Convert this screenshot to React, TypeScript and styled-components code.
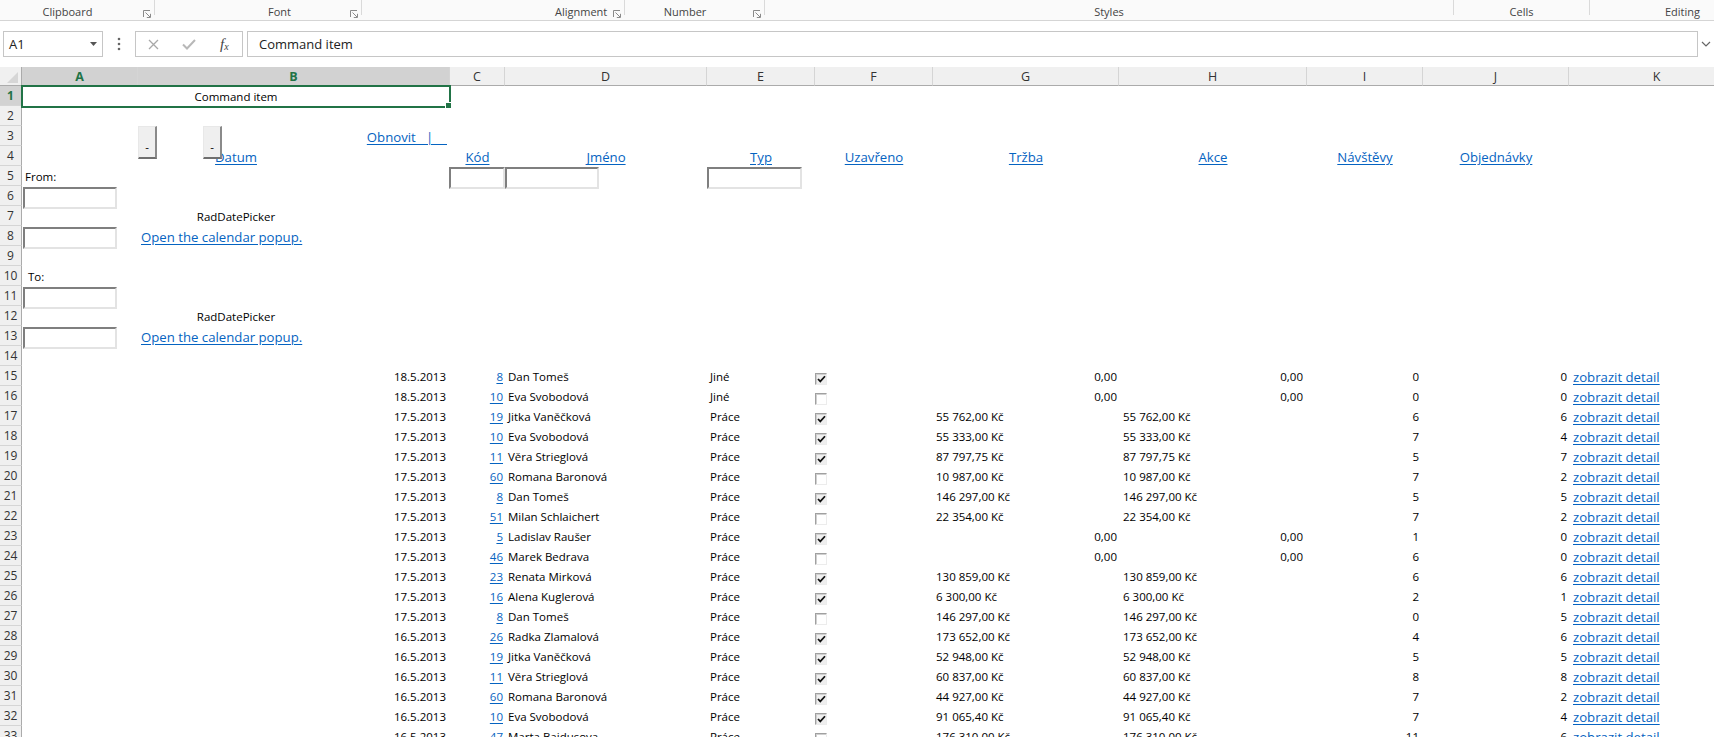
import React from 'react'
import styled, { createGlobalStyle, css } from 'styled-components'

const COLS = [22, 116, 312, 55, 202, 108, 118, 186, 188, 116, 146, 176]
const LETTERS = ['A', 'B', 'C', 'D', 'E', 'F', 'G', 'H', 'I', 'J', 'K']
const ROWS = 33
const LINK = '#0563c1'
const GREEN = '#217346'

// indent: captions that sit off-centre in the ref start at a fixed offset
const GROUPS: { name: string; w: number; launcher: boolean; indent?: number }[] = [
  { name: 'Clipboard', w: 155, launcher: true },
  { name: 'Font', w: 207, launcher: true, indent: 113 },
  { name: 'Alignment', w: 263, launcher: true, indent: 193 },
  { name: 'Number', w: 140, launcher: true },
  { name: 'Styles', w: 689, launcher: false },
  { name: 'Cells', w: 136, launcher: false },
  { name: 'Editing', w: 186, launcher: false }
]

type Rec = {
  d: string
  code: number
  name: string
  type: string
  done: boolean
  sales: string
  action: string
  visits: number
  orders: number
}

const DATA: Rec[] = [
  { d: '18.5.2013', code: 8, name: 'Dan Tomeš', type: 'Jiné', done: true, sales: '0,00', action: '0,00', visits: 0, orders: 0 },
  { d: '18.5.2013', code: 10, name: 'Eva Svobodová', type: 'Jiné', done: false, sales: '0,00', action: '0,00', visits: 0, orders: 0 },
  { d: '17.5.2013', code: 19, name: 'Jitka Vaněčková', type: 'Práce', done: true, sales: '55 762,00 Kč', action: '55 762,00 Kč', visits: 6, orders: 6 },
  { d: '17.5.2013', code: 10, name: 'Eva Svobodová', type: 'Práce', done: true, sales: '55 333,00 Kč', action: '55 333,00 Kč', visits: 7, orders: 4 },
  { d: '17.5.2013', code: 11, name: 'Věra Strieglová', type: 'Práce', done: true, sales: '87 797,75 Kč', action: '87 797,75 Kč', visits: 5, orders: 7 },
  { d: '17.5.2013', code: 60, name: 'Romana Baronová', type: 'Práce', done: false, sales: '10 987,00 Kč', action: '10 987,00 Kč', visits: 7, orders: 2 },
  { d: '17.5.2013', code: 8, name: 'Dan Tomeš', type: 'Práce', done: true, sales: '146 297,00 Kč', action: '146 297,00 Kč', visits: 5, orders: 5 },
  { d: '17.5.2013', code: 51, name: 'Milan Schlaichert', type: 'Práce', done: false, sales: '22 354,00 Kč', action: '22 354,00 Kč', visits: 7, orders: 2 },
  { d: '17.5.2013', code: 5, name: 'Ladislav Raušer', type: 'Práce', done: true, sales: '0,00', action: '0,00', visits: 1, orders: 0 },
  { d: '17.5.2013', code: 46, name: 'Marek Bedrava', type: 'Práce', done: false, sales: '0,00', action: '0,00', visits: 6, orders: 0 },
  { d: '17.5.2013', code: 23, name: 'Renata Mirková', type: 'Práce', done: true, sales: '130 859,00 Kč', action: '130 859,00 Kč', visits: 6, orders: 6 },
  { d: '17.5.2013', code: 16, name: 'Alena Kuglerová', type: 'Práce', done: true, sales: '6 300,00 Kč', action: '6 300,00 Kč', visits: 2, orders: 1 },
  { d: '17.5.2013', code: 8, name: 'Dan Tomeš', type: 'Práce', done: false, sales: '146 297,00 Kč', action: '146 297,00 Kč', visits: 0, orders: 5 },
  { d: '16.5.2013', code: 26, name: 'Radka Zlamalová', type: 'Práce', done: true, sales: '173 652,00 Kč', action: '173 652,00 Kč', visits: 4, orders: 6 },
  { d: '16.5.2013', code: 19, name: 'Jitka Vaněčková', type: 'Práce', done: true, sales: '52 948,00 Kč', action: '52 948,00 Kč', visits: 5, orders: 5 },
  { d: '16.5.2013', code: 11, name: 'Věra Strieglová', type: 'Práce', done: true, sales: '60 837,00 Kč', action: '60 837,00 Kč', visits: 8, orders: 8 },
  { d: '16.5.2013', code: 60, name: 'Romana Baronová', type: 'Práce', done: true, sales: '44 927,00 Kč', action: '44 927,00 Kč', visits: 7, orders: 2 },
  { d: '16.5.2013', code: 10, name: 'Eva Svobodová', type: 'Práce', done: true, sales: '91 065,40 Kč', action: '91 065,40 Kč', visits: 7, orders: 4 },
  { d: '16.5.2013', code: 47, name: 'Marta Bajdusova', type: 'Práce', done: false, sales: '176 310,00 Kč', action: '176 310,00 Kč', visits: 11, orders: 6 }
]

const HEADERS = [
  { c: 2, label: 'Kód' },
  { c: 3, label: 'Jméno' },
  { c: 4, label: 'Typ' },
  { c: 5, label: 'Uzavřeno' },
  { c: 6, label: 'Tržba' },
  { c: 7, label: 'Akce' },
  { c: 8, label: 'Návštěvy' },
  { c: 9, label: 'Objednávky' }
]

const GlobalStyle = createGlobalStyle`
  html, body {
    margin: 0;
    padding: 0;
    background: #fff;
    overflow: hidden;
  }
  body {
    width: 1714px;
    height: 737px;
    font-family: 'Open Sans', 'Noto Sans', sans-serif;
    color: #000;
  }
`

/* ribbon group captions */
const Ribbon = styled.div`
  display: flex;
  height: 20px;
  border-bottom: 1px solid #d5d5d5;
  background: #fafafa;
  overflow: hidden;
`

const Group = styled.div<{ $w: number }>`
  display: flex;
  flex: 0 0 ${({ $w }) => $w}px;
  min-width: 0;
  height: 20px;
`

const GroupLabel = styled.div<{ $indent?: number }>`
  flex: 1 1 0;
  min-width: 0;
  text-align: ${({ $indent }) => ($indent == null ? 'center' : 'left')};
  font-size: 11px;
  line-height: 17px;
  padding: 3px 0 0 ${({ $indent }) => $indent ?? 0}px;
  color: #444;
  white-space: nowrap;
`

const Launcher = styled.span`
  flex: 0 0 19px;
  box-sizing: border-box;
  padding: 10px 0 0 8px;
  display: flex;
  align-items: flex-start;
`

const GroupSep = styled.span`
  flex: 0 0 1px;
  height: 15px;
  background: #dadada;
`

/* formula bar */
const FormulaArea = styled.div`
  display: flex;
  align-items: flex-start;
  height: 46px;
  box-sizing: border-box;
  padding: 10px 0 0 3px;
  background: #fff;
`

const boxFrame = css`
  box-sizing: border-box;
  height: 26px;
  border: 1px solid #c6c6c6;
  background: #fff;
`

const NameBox = styled.div`
  ${boxFrame};
  width: 100px;
  display: flex;
  align-items: center;
  justify-content: space-between;
  padding: 0 5px;
  font-size: 13px;
  color: #222;
`

const Dots = styled.div`
  width: 32px;
  height: 26px;
  display: flex;
  align-items: center;
  justify-content: center;
`

const FxBox = styled.div`
  ${boxFrame};
  width: 108px;
  display: grid;
  grid-template-columns: repeat(3, 1fr);
  align-items: center;
  justify-items: center;
`

const Fx = styled.span`
  font-family: 'Liberation Serif', 'DejaVu Serif', serif;
  font-style: italic;
  font-size: 15px;
  color: #444;
  line-height: 1;

  sub {
    font-size: 10px;
    vertical-align: -1px;
  }
`

const FormulaInput = styled.div`
  ${boxFrame};
  flex: 1;
  margin-left: 4px;
  padding-left: 11px;
  font-size: 13px;
  line-height: 24px;
  color: #222;
`

const Expand = styled.div`
  width: 16px;
  height: 26px;
  display: flex;
  align-items: center;
  justify-content: center;
`

/* sheet grid */
const Sheet = styled.div`
  display: grid;
  grid-template-columns: ${COLS.map(w => `${w}px`).join(' ')};
  grid-template-rows: 19px repeat(${ROWS}, 20px);
  font-size: 11.5px;
  line-height: 20px;
  color: #000;
`

const Corner = styled.div`
  grid-column: 1;
  grid-row: 1;
  box-sizing: border-box;
  background: #f0f0f0;
  border-right: 1px solid #ababab;
  border-bottom: 1px solid #ababab;
`

const ColHead = styled.div<{ $sel?: boolean }>`
  grid-row: 1;
  box-sizing: border-box;
  border-bottom: 1px solid #ababab;
  border-right: 1px solid #d5d5d5;
  background: ${({ $sel }) => ($sel ? '#d2d2d2' : '#f0f0f0')};
  color: ${({ $sel }) => ($sel ? GREEN : '#333')};
  font-weight: ${({ $sel }) => ($sel ? 700 : 400)};
  font-size: 12.5px;
  line-height: 19px;
  text-align: center;
`

const RowHead = styled.div<{ $row: number; $sel?: boolean }>`
  grid-column: 1;
  grid-row: ${({ $row }) => $row + 1};
  box-sizing: border-box;
  border-right: 1px solid #ababab;
  border-bottom: 1px solid #d5d5d5;
  background: ${({ $sel }) => ($sel ? '#d2d2d2' : '#f0f0f0')};
  color: ${({ $sel }) => ($sel ? GREEN : '#333')};
  font-weight: ${({ $sel }) => ($sel ? 700 : 400)};
  font-size: 12px;
  line-height: 20px;
  text-align: center;
`

type Place = { $c: number; $r: number; $span?: number }
type Align = { $align?: 'start' | 'end' | 'center'; $pl?: number; $pr?: number }

const place = css<Place>`
  grid-column: ${({ $c }) => $c + 2} / span ${({ $span }) => $span ?? 1};
  grid-row: ${({ $r }) => $r + 1};
`

const aligned = css<Place & Align>`
  ${place};
  justify-self: ${({ $align }) => $align ?? 'start'};
  padding: 1px ${({ $pr }) => $pr ?? 0}px 0 ${({ $pl }) => $pl ?? 0}px;
  white-space: nowrap;
`

const CellText = styled.div<Place & Align>`
  ${aligned};
`

const CellLink = styled.a<Place & Align & { $big?: boolean }>`
  ${aligned};
  color: ${LINK};
  font-size: ${({ $big }) => ($big ? 13.2 : 11.5)}px;
  text-decoration: underline;
  text-underline-offset: 2px;
  cursor: pointer;
`

const Selection = styled.div`
  grid-column: 2 / span 2;
  grid-row: 2;
  margin: -1px -1px -2px -1px;
  border: 2px solid ${GREEN};
  position: relative;
  z-index: 2;
  display: flex;
  align-items: center;
  justify-content: center;
  line-height: 18px;
`

const FillHandle = styled.span`
  position: absolute;
  right: -3px;
  bottom: -3px;
  width: 5px;
  height: 5px;
  background: ${GREEN};
  border: 1px solid #fff;
`

const ButtonPair = styled.div<Place>`
  ${place};
  display: flex;
  gap: 46px;
  align-self: start;
  position: relative;
  z-index: 1;
`

const PushButton = styled.button`
  width: 19px;
  height: 33px;
  padding: 0 0 3px;
  box-sizing: border-box;
  background: #efefef;
  border-style: solid;
  border-width: 1px 2px 2px 1px;
  border-color: #e8e8e8 #8a8a8a #6f6f6f #e8e8e8;
  display: flex;
  align-items: flex-end;
  justify-content: center;
  font-family: 'Open Sans', sans-serif;
  font-size: 11.5px;
  line-height: 14px;
  color: #000;
`

const InputBox = styled.div<Place & { $w: number; $ml?: number }>`
  ${place};
  justify-self: start;
  align-self: start;
  width: ${({ $w }) => $w}px;
  height: 22px;
  margin: 1px 0 0 ${({ $ml }) => $ml ?? 0}px;
  box-sizing: border-box;
  background: #fff;
  border-style: solid;
  border-width: 2px;
  border-color: #7f7f7f #e3e3e3 #e3e3e3 #7f7f7f;
  position: relative;
  z-index: 1;
`

const CheckBox = styled.span<Place & { $on: boolean }>`
  ${place};
  justify-self: start;
  align-self: start;
  margin-top: 7px;
  width: 12px;
  height: 12px;
  box-sizing: border-box;
  border: 1px solid;
  border-color: #a0a0a0 #ececec #ececec #a0a0a0;
  box-shadow: inset 1px 1px 0 #d0d0d0;
  background: ${({ $on }) => ($on ? '#efefef' : '#fff')};
  display: flex;
  align-items: center;
  justify-content: center;
`

function LauncherIcon() {
  return (
    <svg width="8" height="8" viewBox="0 0 8 8">
      <path d="M0.5 7V0.5H7" fill="none" stroke="#8a8a8a" strokeWidth="1" />
      <path d="M2.5 2.5L7 7M7.5 3.8V7.5H3.8" fill="none" stroke="#8a8a8a" strokeWidth="1" />
    </svg>
  )
}

function CheckMark() {
  return (
    <svg width="9" height="8" viewBox="0 0 9 8">
      <path d="M1 4L3.3 6.4L8 1.2" fill="none" stroke="#111" strokeWidth="1.7" />
    </svg>
  )
}

const isNumber = (v: string) => !v.endsWith('Kč')

export default function App() {
  return (
    <>
      <GlobalStyle />
      <Ribbon>
        {GROUPS.map(g => (
          <Group key={g.name} $w={g.w}>
            <GroupLabel $indent={g.indent}>{g.name}</GroupLabel>
            {g.launcher && (
              <Launcher>
                <LauncherIcon />
              </Launcher>
            )}
            <GroupSep />
          </Group>
        ))}
      </Ribbon>

      <FormulaArea>
        <NameBox>
          <span>A1</span>
          <svg width="7" height="4" viewBox="0 0 7 4">
            <polygon points="0,0 7,0 3.5,4" fill="#555" />
          </svg>
        </NameBox>
        <Dots>
          <svg width="4" height="14" viewBox="0 0 4 14">
            <circle cx="2" cy="2" r="1.3" fill="#666" />
            <circle cx="2" cy="7" r="1.3" fill="#666" />
            <circle cx="2" cy="12" r="1.3" fill="#666" />
          </svg>
        </Dots>
        <FxBox>
          <svg width="11" height="11" viewBox="0 0 11 11">
            <path d="M1 1L10 10M10 1L1 10" stroke="#a8a8a8" strokeWidth="1.3" />
          </svg>
          <svg width="14" height="11" viewBox="0 0 14 11">
            <path d="M1 5.5L5 9.5L13 1" fill="none" stroke="#b8b8b8" strokeWidth="2" />
          </svg>
          <Fx>
            f<sub>x</sub>
          </Fx>
        </FxBox>
        <FormulaInput>Command item</FormulaInput>
        <Expand>
          <svg width="10" height="6" viewBox="0 0 10 6">
            <path d="M1 1L5 5L9 1" fill="none" stroke="#666" strokeWidth="1.2" />
          </svg>
        </Expand>
      </FormulaArea>

      <Sheet>
        <Corner>
          <svg width="21" height="18" viewBox="0 0 21 18">
            <polygon points="18,5 18,16 7,16" fill="#d6d6d6" />
          </svg>
        </Corner>
        {LETTERS.map((l, i) => (
          <ColHead key={l} $sel={i < 2}>
            {l}
          </ColHead>
        ))}
        {Array.from({ length: ROWS }, (_, i) => (
          <RowHead key={i} $row={i + 1} $sel={i === 0}>
            {i + 1}
          </RowHead>
        ))}

        <Selection>
          Command item
          <FillHandle />
        </Selection>

        <ButtonPair $c={1} $r={3}>
          <PushButton>-</PushButton>
          <PushButton>-</PushButton>
        </ButtonPair>
        <CellLink $c={1} $r={3} $align="end" $pr={3} $big>
          Obnovit&nbsp;&nbsp;&nbsp;|&nbsp;&nbsp;&nbsp;&nbsp;
        </CellLink>

        <CellLink $c={0} $r={4} $span={2} $align="center" $big>
          Datum
        </CellLink>
        {HEADERS.map(h => (
          <CellLink key={h.label} $c={h.c} $r={4} $align="center" $big>
            {h.label}
          </CellLink>
        ))}

        <CellText $c={0} $r={5} $pl={3}>
          From:
        </CellText>
        <InputBox $c={2} $r={5} $w={56} $ml={-1} />
        <InputBox $c={3} $r={5} $w={94} />
        <InputBox $c={4} $r={5} $w={95} />

        <InputBox $c={0} $r={6} $w={94} $ml={1} />
        <CellText $c={0} $r={7} $span={2} $align="center">
          RadDatePicker
        </CellText>
        <InputBox $c={0} $r={8} $w={94} $ml={1} />
        <CellLink $c={1} $r={8} $pl={3} $big>
          Open the calendar popup.
        </CellLink>

        <CellText $c={0} $r={10} $pl={6}>
          To:
        </CellText>
        <InputBox $c={0} $r={11} $w={94} $ml={1} />
        <CellText $c={0} $r={12} $span={2} $align="center">
          RadDatePicker
        </CellText>
        <InputBox $c={0} $r={13} $w={94} $ml={1} />
        <CellLink $c={1} $r={13} $pl={3} $big>
          Open the calendar popup.
        </CellLink>

        {DATA.map((rec, i) => {
          const r = 15 + i
          return (
            <React.Fragment key={r}>
              <CellText $c={1} $r={r} $align="end" $pr={4}>
                {rec.d}
              </CellText>
              <CellLink $c={2} $r={r} $align="end" $pr={2}>
                {rec.code}
              </CellLink>
              <CellText $c={3} $r={r} $pl={3}>
                {rec.name}
              </CellText>
              <CellText $c={4} $r={r} $pl={3}>
                {rec.type}
              </CellText>
              <CheckBox $c={5} $r={r} $on={rec.done}>
                {rec.done && <CheckMark />}
              </CheckBox>
              {isNumber(rec.sales) ? (
                <CellText $c={6} $r={r} $align="end" $pr={2}>
                  {rec.sales}
                </CellText>
              ) : (
                <CellText $c={6} $r={r} $pl={3}>
                  {rec.sales}
                </CellText>
              )}
              {isNumber(rec.action) ? (
                <CellText $c={7} $r={r} $align="end" $pr={4}>
                  {rec.action}
                </CellText>
              ) : (
                <CellText $c={7} $r={r} $pl={4}>
                  {rec.action}
                </CellText>
              )}
              <CellText $c={8} $r={r} $align="end" $pr={4}>
                {rec.visits}
              </CellText>
              <CellText $c={9} $r={r} $align="end" $pr={2}>
                {rec.orders}
              </CellText>
              <CellLink $c={10} $r={r} $pl={4} $big>
                zobrazit detail
              </CellLink>
            </React.Fragment>
          )
        })}
      </Sheet>
    </>
  )
}
